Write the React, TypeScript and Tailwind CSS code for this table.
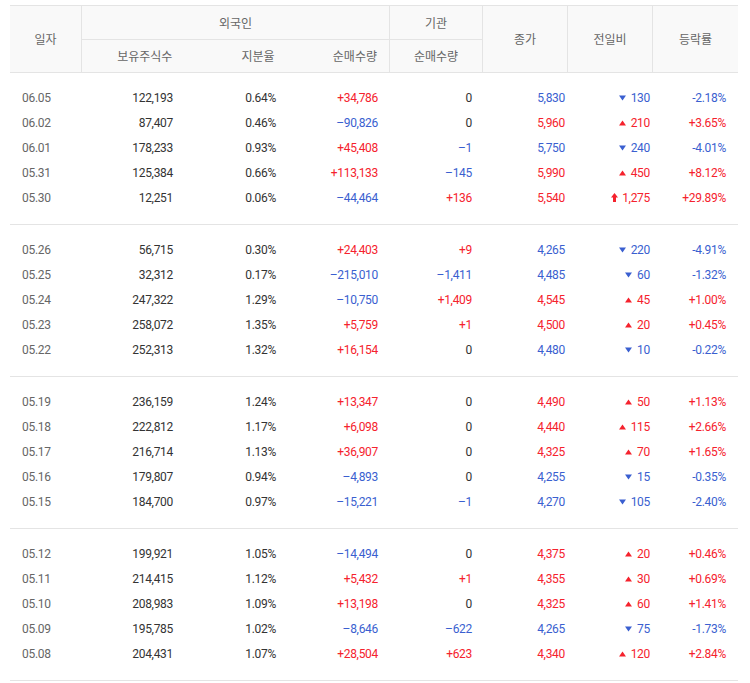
import React from "react";

type Dir = "up" | "down" | "limit" | "none";
type Row = {
  d: string;
  hold: string;
  ratio: string;
  fnet: string;
  inet: string;
  close: string;
  dir: Dir;
  diff: string;
  rate: string;
};

const groups: Row[][] = [
  [
    { d: "06.05", hold: "122,193", ratio: "0.64%", fnet: "+34,786", inet: "0", close: "5,830", dir: "down", diff: "130", rate: "-2.18%" },
    { d: "06.02", hold: "87,407", ratio: "0.46%", fnet: "–90,826", inet: "0", close: "5,960", dir: "up", diff: "210", rate: "+3.65%" },
    { d: "06.01", hold: "178,233", ratio: "0.93%", fnet: "+45,408", inet: "–1", close: "5,750", dir: "down", diff: "240", rate: "-4.01%" },
    { d: "05.31", hold: "125,384", ratio: "0.66%", fnet: "+113,133", inet: "–145", close: "5,990", dir: "up", diff: "450", rate: "+8.12%" },
    { d: "05.30", hold: "12,251", ratio: "0.06%", fnet: "–44,464", inet: "+136", close: "5,540", dir: "limit", diff: "1,275", rate: "+29.89%" },
  ],
  [
    { d: "05.26", hold: "56,715", ratio: "0.30%", fnet: "+24,403", inet: "+9", close: "4,265", dir: "down", diff: "220", rate: "-4.91%" },
    { d: "05.25", hold: "32,312", ratio: "0.17%", fnet: "–215,010", inet: "–1,411", close: "4,485", dir: "down", diff: "60", rate: "-1.32%" },
    { d: "05.24", hold: "247,322", ratio: "1.29%", fnet: "–10,750", inet: "+1,409", close: "4,545", dir: "up", diff: "45", rate: "+1.00%" },
    { d: "05.23", hold: "258,072", ratio: "1.35%", fnet: "+5,759", inet: "+1", close: "4,500", dir: "up", diff: "20", rate: "+0.45%" },
    { d: "05.22", hold: "252,313", ratio: "1.32%", fnet: "+16,154", inet: "0", close: "4,480", dir: "down", diff: "10", rate: "-0.22%" },
  ],
  [
    { d: "05.19", hold: "236,159", ratio: "1.24%", fnet: "+13,347", inet: "0", close: "4,490", dir: "up", diff: "50", rate: "+1.13%" },
    { d: "05.18", hold: "222,812", ratio: "1.17%", fnet: "+6,098", inet: "0", close: "4,440", dir: "up", diff: "115", rate: "+2.66%" },
    { d: "05.17", hold: "216,714", ratio: "1.13%", fnet: "+36,907", inet: "0", close: "4,325", dir: "up", diff: "70", rate: "+1.65%" },
    { d: "05.16", hold: "179,807", ratio: "0.94%", fnet: "–4,893", inet: "0", close: "4,255", dir: "down", diff: "15", rate: "-0.35%" },
    { d: "05.15", hold: "184,700", ratio: "0.97%", fnet: "–15,221", inet: "–1", close: "4,270", dir: "down", diff: "105", rate: "-2.40%" },
  ],
  [
    { d: "05.12", hold: "199,921", ratio: "1.05%", fnet: "–14,494", inet: "0", close: "4,375", dir: "up", diff: "20", rate: "+0.46%" },
    { d: "05.11", hold: "214,415", ratio: "1.12%", fnet: "+5,432", inet: "+1", close: "4,355", dir: "up", diff: "30", rate: "+0.69%" },
    { d: "05.10", hold: "208,983", ratio: "1.09%", fnet: "+13,198", inet: "0", close: "4,325", dir: "up", diff: "60", rate: "+1.41%" },
    { d: "05.09", hold: "195,785", ratio: "1.02%", fnet: "–8,646", inet: "–622", close: "4,265", dir: "down", diff: "75", rate: "-1.73%" },
    { d: "05.08", hold: "204,431", ratio: "1.07%", fnet: "+28,504", inet: "+623", close: "4,340", dir: "up", diff: "120", rate: "+2.84%" },
  ],
];

const RED = "text-[#f5222d]";
const BLUE = "text-[#3a5fd0]";
const DARK = "text-[#333333]";

function signColor(v: string) {
  if (v.startsWith("+")) return RED;
  if (v.startsWith("–") || v.startsWith("-")) return BLUE;
  return DARK;
}

function dirColor(d: Dir) {
  if (d === "up" || d === "limit") return RED;
  if (d === "down") return BLUE;
  return DARK;
}

function Arrow({ dir }: { dir: Dir }) {
  if (dir === "down")
    return (
      <svg width="7" height="6" viewBox="0 0 7 6" className="mr-[5px]">
        <path d="M0 0.5 H7 L3.5 5.5 Z" fill="#3a5fd0" />
      </svg>
    );
  if (dir === "up")
    return (
      <svg width="7" height="6" viewBox="0 0 7 6" className="mr-[5px]">
        <path d="M0 5.5 H7 L3.5 0.5 Z" fill="#f5222d" />
      </svg>
    );
  if (dir === "limit")
    return (
      <svg width="7" height="9" viewBox="0 0 7 9" className="mr-[4px]">
        <path d="M3.5 0 L7 4.5 H5 V9 H2 V4.5 H0 Z" fill="#f5222d" />
      </svg>
    );
  return null;
}

const grid = "grid grid-cols-[72px_103px_103px_102px_93px_85px_85px_85px]";

export default function App() {
  return (
    <div
      className="w-[750px] h-[683px] bg-white overflow-hidden pt-[5px] pl-[10px]"
      style={{ fontFamily: "Roboto, 'Noto Sans CJK KR', 'Noto Sans', sans-serif" }}
    >
      <div className="w-[728px]">
        {/* header */}
        <div
          className="grid grid-cols-[72px_308px_93px_85px_85px_85px] grid-rows-[34px_32px] bg-[#f9f9f9] border-t border-b border-[#e4e4e4] text-[12px] text-[#666666]"
          style={{ fontFamily: "'Noto Sans CJK KR', sans-serif" }}
        >
          <div className="row-span-2 flex items-center justify-center border-r border-[#e4e4e4]">일자</div>
          <div className="flex items-center justify-center border-r border-b border-[#e4e4e4]">외국인</div>
          <div className="flex items-center justify-center border-r border-b border-[#e4e4e4]">기관</div>
          <div className="row-span-2 flex items-center justify-center border-r border-[#e4e4e4]">종가</div>
          <div className="row-span-2 flex items-center justify-center border-r border-[#e4e4e4]">전일비</div>
          <div className="row-span-2 flex items-center justify-center">등락률</div>
          <div className="grid grid-cols-3 border-r border-[#e4e4e4]">
            <div className="flex items-center justify-end pr-[12px]">보유주식수</div>
            <div className="flex items-center justify-end pr-[12px]">지분율</div>
            <div className="flex items-center justify-end pr-[12px]">순매수량</div>
          </div>
          <div className="flex items-center justify-center border-r border-[#e4e4e4]">순매수량</div>
        </div>

        {/* body */}
        {groups.map((g, gi) => (
          <div key={gi} className="pt-[12px] pb-[14px] border-b border-[#e4e4e4] text-[12px] tracking-[-0.3px]">
            {g.map((r) => (
              <div key={r.d} className={`${grid} h-[25px] items-center`}>
                <div className="pl-[12px] text-[#666666]">{r.d}</div>
                <div className={`text-right pr-[12px] ${DARK}`}>{r.hold}</div>
                <div className={`text-right pr-[12px] ${DARK}`}>{r.ratio}</div>
                <div className={`text-right pr-[12px] ${signColor(r.fnet)}`}>{r.fnet}</div>
                <div className={`text-right pr-[11px] ${signColor(r.inet)}`}>{r.inet}</div>
                <div className={`text-right pr-[3px] ${dirColor(r.dir)}`}>{r.close}</div>
                <div className={`flex items-center justify-end pr-[3px] ${dirColor(r.dir)}`}>
                  <Arrow dir={r.dir} />
                  <span>{r.diff}</span>
                </div>
                <div className={`text-right pr-[12px] ${signColor(r.rate)}`}>{r.rate}</div>
              </div>
            ))}
          </div>
        ))}
      </div>
    </div>
  );
}
